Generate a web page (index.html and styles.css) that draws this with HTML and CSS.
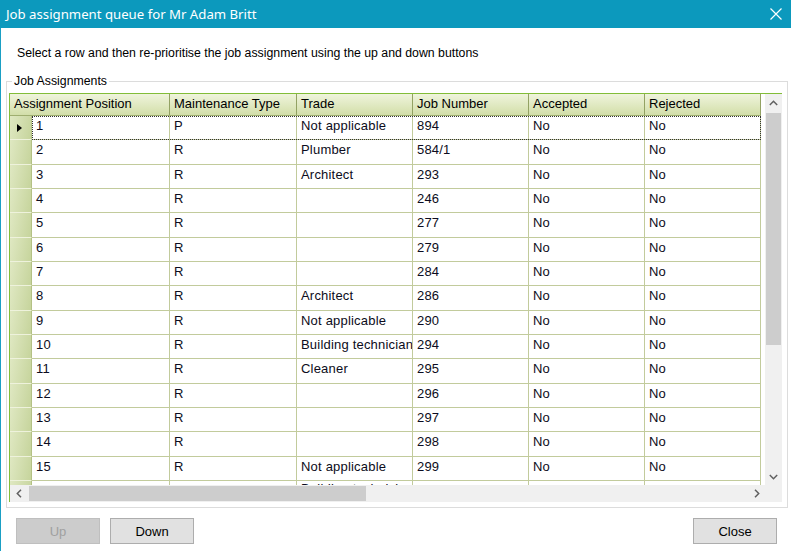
FILE: index.html
```html
<!DOCTYPE html>
<html>
<head>
<meta charset="utf-8">
<link rel="stylesheet" href="styles.css">
</head>
<body>
<div class="window">
  <div class="titlebar">
    <span class="title">Job assignment queue for Mr Adam Britt</span>
    <svg class="close" width="12" height="12" viewBox="0 0 12 12"><path d="M0.5 0.5 L11.5 11.5 M11.5 0.5 L0.5 11.5" stroke="#fff" stroke-width="1.2" fill="none"/></svg>
  </div>
  <div class="content">
    <p class="instr">Select a row and then re-prioritise the job assignment using the up and down buttons</p>
    <fieldset class="group">
      <legend>Job Assignments</legend>
      <div class="grid">
        <div class="view">
          <div class="hdr">
            <div class="hcell">Assignment Position</div>
            <div class="hcell">Maintenance Type</div>
            <div class="hcell">Trade</div>
            <div class="hcell">Job Number</div>
            <div class="hcell">Accepted</div>
            <div class="hcell">Rejected</div>
          </div>
          <div class="row current"><div class="rh"><span class="tri"></span></div><div class="c">1</div><div class="c">P</div><div class="c">Not applicable</div><div class="c">894</div><div class="c">No</div><div class="c">No</div></div>
          <div class="row"><div class="rh"></div><div class="c">2</div><div class="c">R</div><div class="c">Plumber</div><div class="c">584/1</div><div class="c">No</div><div class="c">No</div></div>
          <div class="row"><div class="rh"></div><div class="c">3</div><div class="c">R</div><div class="c">Architect</div><div class="c">293</div><div class="c">No</div><div class="c">No</div></div>
          <div class="row"><div class="rh"></div><div class="c">4</div><div class="c">R</div><div class="c"></div><div class="c">246</div><div class="c">No</div><div class="c">No</div></div>
          <div class="row"><div class="rh"></div><div class="c">5</div><div class="c">R</div><div class="c"></div><div class="c">277</div><div class="c">No</div><div class="c">No</div></div>
          <div class="row"><div class="rh"></div><div class="c">6</div><div class="c">R</div><div class="c"></div><div class="c">279</div><div class="c">No</div><div class="c">No</div></div>
          <div class="row"><div class="rh"></div><div class="c">7</div><div class="c">R</div><div class="c"></div><div class="c">284</div><div class="c">No</div><div class="c">No</div></div>
          <div class="row"><div class="rh"></div><div class="c">8</div><div class="c">R</div><div class="c">Architect</div><div class="c">286</div><div class="c">No</div><div class="c">No</div></div>
          <div class="row"><div class="rh"></div><div class="c">9</div><div class="c">R</div><div class="c">Not applicable</div><div class="c">290</div><div class="c">No</div><div class="c">No</div></div>
          <div class="row"><div class="rh"></div><div class="c">10</div><div class="c">R</div><div class="c">Building technician</div><div class="c">294</div><div class="c">No</div><div class="c">No</div></div>
          <div class="row"><div class="rh"></div><div class="c">11</div><div class="c">R</div><div class="c">Cleaner</div><div class="c">295</div><div class="c">No</div><div class="c">No</div></div>
          <div class="row"><div class="rh"></div><div class="c">12</div><div class="c">R</div><div class="c"></div><div class="c">296</div><div class="c">No</div><div class="c">No</div></div>
          <div class="row"><div class="rh"></div><div class="c">13</div><div class="c">R</div><div class="c"></div><div class="c">297</div><div class="c">No</div><div class="c">No</div></div>
          <div class="row"><div class="rh"></div><div class="c">14</div><div class="c">R</div><div class="c"></div><div class="c">298</div><div class="c">No</div><div class="c">No</div></div>
          <div class="row"><div class="rh"></div><div class="c">15</div><div class="c">R</div><div class="c">Not applicable</div><div class="c">299</div><div class="c">No</div><div class="c">No</div></div>
          <div class="row"><div class="rh"></div><div class="c"></div><div class="c"></div><div class="c c-up">Building technician</div><div class="c"></div><div class="c"></div><div class="c"></div></div>
        </div>
        <div class="vscroll">
          <div class="sbtn"><svg width="9" height="6" viewBox="0 0 9 6"><polyline points="0.8,5 4.5,1.3 8.2,5" fill="none" stroke="#606060" stroke-width="1.5"/></svg></div>
          <div class="vthumb"></div>
          <div class="vfill"></div>
          <div class="sbtn"><svg width="9" height="6" viewBox="0 0 9 6"><polyline points="0.8,1 4.5,4.7 8.2,1" fill="none" stroke="#606060" stroke-width="1.5"/></svg></div>
        </div>
        <div class="hscroll">
          <div class="hbtn"><svg width="6" height="9" viewBox="0 0 6 9"><polyline points="5,0.8 1.3,4.5 5,8.2" fill="none" stroke="#606060" stroke-width="1.5"/></svg></div>
          <div class="hthumb"></div>
          <div class="hfill"></div>
          <div class="hbtn"><svg width="6" height="9" viewBox="0 0 6 9"><polyline points="1,0.8 4.7,4.5 1,8.2" fill="none" stroke="#606060" stroke-width="1.5"/></svg></div>
        </div>
        <div class="corner"></div>
      </div>
    </fieldset>
    <div class="buttons">
      <button class="btn" disabled>Up</button>
      <button class="btn">Down</button>
      <span class="spacer"></span>
      <button class="btn">Close</button>
    </div>
  </div>
</div>
</body>
</html>
```
FILE: styles.css
```css
html, body {
  margin: 0;
  padding: 0;
  background: #ffffff;
}
body {
  width: 791px;
  height: 551px;
  overflow: hidden;
  font-family: "Liberation Sans", Arial, sans-serif;
  font-size: 13px;
  color: #000;
}
.window {
  width: 791px;
  height: 551px;
  box-sizing: border-box;
  border-left: 1px solid #1a9fc4;
  background: #fff;
  display: flex;
  flex-direction: column;
}
.titlebar {
  height: 28px;
  flex: none;
  background: #0c99bd;
  display: flex;
  align-items: center;
  justify-content: space-between;
  padding: 0 9px 0 6px;
  margin-left: -1px;
}
.title {
  font-family: "Noto Sans", "Open Sans", sans-serif;
  font-size: 13.2px;
  color: #fff;
  line-height: 20px;
}
.close {
  display: block;
}
.content {
  flex: 1;
  display: flex;
  flex-direction: column;
}
.instr {
  margin: 0;
  padding: 18px 0 0 16px;
  line-height: 15px;
  font-size: 12.3px;
}
.group {
  margin: 13px 3px 0 5px;
  padding: 4px 5px 5px 2px;
  border: 1px solid #dcdcdc;
  min-width: 0;
}
.group legend {
  margin-left: 3px;
  padding: 0 2px;
  line-height: 15px;
  font-size: 12.3px;
}
.grid {
  display: grid;
  grid-template-columns: 1fr 17px;
  grid-template-rows: 391px 17px;
  border-left: 1px solid #82bd38;
  border-top: 1px solid #82bd38;
}
.view {
  overflow: hidden;
  background: #fff;
}
.hdr {
  display: grid;
  grid-template-columns: 160px 127px 116px 116px 116px 116px;
  width: 751px;
  height: 22px;
  box-sizing: border-box;
  background: linear-gradient(#eff4dc, #dbe5b8 70%, #d2dea9);
  border-bottom: 1px solid #9fae70;
}
.hcell {
  border-right: 1px solid #93a263;
  padding: 2px 0 0 4px;
  line-height: 15px;
  white-space: nowrap;
  overflow: hidden;
}
.row {
  display: grid;
  grid-template-columns: 22px 138px 127px 116px 116px 116px 116px;
  width: 751px;
  height: 24.35px;
  box-sizing: border-box;
  position: relative;
}
.row .c {
  border-right: 1px solid #c2cb9c;
  border-bottom: 1px solid #c2cb9c;
  padding: 2px 0 0 4px;
  line-height: 15px;
  white-space: nowrap;
  overflow: hidden;
  letter-spacing: 0.2px;
  color: #0c0c20;
}
.row .c-up {
  padding-top: 0;
}
.rh {
  background: linear-gradient(100deg, #dfe8c2, #c6d49c);
  border-right: 1px solid #b4c185;
  border-bottom: 1px solid #eef2dc;
  display: flex;
  align-items: center;
  justify-content: center;
}
.tri {
  width: 0;
  height: 0;
  border-top: 4.5px solid transparent;
  border-bottom: 4.5px solid transparent;
  border-left: 5.5px solid #000;
  margin: 1px 2px 0 0;
}
.row.current::after {
  content: "";
  position: absolute;
  left: 22px;
  top: 0;
  right: 0;
  bottom: 0;
  border: 1px dotted #333;
  pointer-events: none;
}
.vscroll {
  background: #f0f0f0;
  display: flex;
  flex-direction: column;
}
.sbtn {
  height: 17px;
  flex: none;
  display: flex;
  align-items: center;
  justify-content: center;
}
.vthumb {
  height: 232px;
  margin: 2px 1px 0 1px;
  background: #cdcdcd;
  flex: none;
}
.vfill {
  flex: 1;
}
.hscroll {
  background: #f0f0f0;
  display: flex;
}
.hbtn {
  width: 17px;
  flex: none;
  display: flex;
  align-items: center;
  justify-content: center;
}
.hthumb {
  width: 337px;
  margin: 1px 0 1px 2px;
  background: #cdcdcd;
  flex: none;
}
.hfill {
  flex: 1;
}
.corner {
  background: #f0f0f0;
}
.buttons {
  display: flex;
  gap: 10px;
  margin-top: 10px;
  padding: 0 14px 0 15px;
}
.spacer {
  flex: 1;
}
.btn {
  width: 84px;
  height: 26px;
  box-sizing: border-box;
  border: 1px solid #adadad;
  background: #e1e1e1;
  font-family: "Liberation Sans", Arial, sans-serif;
  font-size: 13px;
  color: #000;
  padding: 0;
}
.btn:disabled {
  background: #cccccc;
  border-color: #bfbfbf;
  color: #a0a0a0;
}
```
